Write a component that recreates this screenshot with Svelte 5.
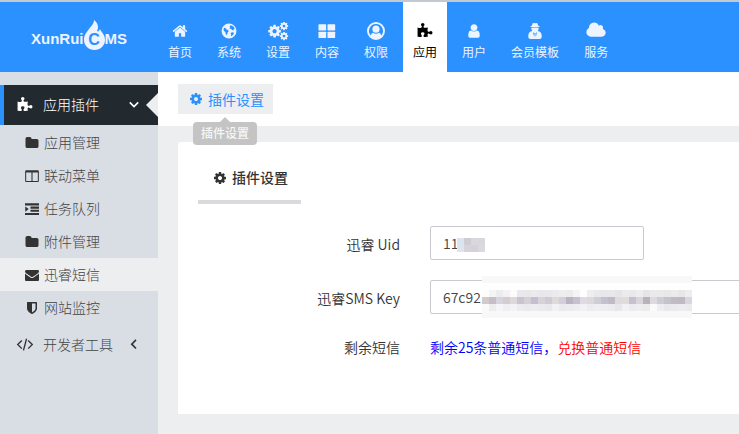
<script>
  const nav = [
    { icon: 'home', label: '首页' },
    { icon: 'globe', label: '系统' },
    { icon: 'cogs', label: '设置' },
    { icon: 'blocks', label: '内容' },
    { icon: 'account', label: '权限' },
    { icon: 'puzzle', label: '应用', active: true },
    { icon: 'user', label: '用户' },
    { icon: 'secret', label: '会员模板' },
    { icon: 'cloud', label: '服务' }
  ];

  const menu = [
    { icon: 'folder', label: '应用管理' },
    { icon: 'columns', label: '联动菜单' },
    { icon: 'indent', label: '任务队列' },
    { icon: 'folder', label: '附件管理' },
    { icon: 'envelope', label: '迅睿短信', active: true },
    { icon: 'shield', label: '网站监控' }
  ];

  const largeIcons = ['account', 'cogs', 'cloud'];

  let uid = $state('11');
  let smsKey = $state('67c92');

  // Colours of the blocks that hide the private part of each value, row by row
  const uidMask = [
    ['#dbe3ee', '#d0ccd4', '#dad8df', '#d8d7de'],
    ['#dfe5ee', '#d7d3da', '#d3d1d9', '#dad9df']
  ];
  const keyMask = [
    Array(30).fill('#f8f8f8'),
    Array(30).fill('#fefefe'),
    ['#fdfdfd', '#f4f4f5', '#ececee', '#f3f3f7', '#fcfcfc', '#e9e8ec', '#e8e7ea', '#ebeaee', '#e8e7eb', '#e9e9ed', '#ebebef', '#eeeef1', '#ececef', '#f4f4f7', '#fefefe', '#eeeef0', '#e9e9ec', '#e8e7ea', '#e8e8eb', '#e5e5e8', '#ebebee', '#e9e9ec', '#ededf0', '#e5e4e8', '#eaeaed', '#e9e9eb', '#e7e7ea', '#ebebee', '#e7e7ea', '#ededf0'],
    ['#d4cbc8', '#c3bec9', '#d6d5df', '#d4cdd0', '#dcd9dd', '#c9c4cd', '#d5d0d6', '#c2bfd0', '#d7d3d7', '#cfcbd5', '#ded9db', '#d2cfd8', '#bab4c2', '#c6c1cd', '#dddce5', '#dcd8dc', '#d1cdd5', '#c3c1cf', '#c0bac4', '#dedbdd', '#e0dcdb', '#c4c1d1', '#d8d5db', '#b8b2bd', '#dcdae1', '#cfccd4', '#c6c2cb', '#c1bbc4', '#beb9c2', '#d8d7df'],
    ['#fbfafa', '#ededef', '#f5f5f7', '#efeff1', '#f3f3f5', '#ececee', '#eaeaed', '#ededf0', '#ebebef', '#e9e9ed', '#f2f2f4', '#ebebee', '#ececef', '#eeeef2', '#f2f2f5', '#ededf0', '#efeff2', '#eeeef1', '#ececef', '#e7e7e9', '#f1f1f4', '#ececf0', '#eeeef1', '#ececee', '#fafafa', '#eeeef0', '#e9e9ed', '#ebebee', '#ededf0', '#ebebee'],
    Array(30).fill('#f8f8f8')
  ];

  const cogPath =
    'M1152 896q0-106-75-181t-181-75-181 75-75 181 75 181 181 75 181-75 75-181zm512-109v222q0 12-8 23t-20 13l-185 28q-19 54-39 91 35 50 107 138 10 12 10 25t-9 23q-27 37-99 108t-94 71q-12 0-26-9l-138-108q-44 23-91 38-16 136-29 186-7 28-36 28h-222q-14 0-24.500-8.500t-11.500-21.500l-28-184q-49-16-90-37l-141 107q-10 9-25 9-14 0-25-11-126-114-165-168-7-10-7-23 0-12 8-23 15-21 51-66.500t54-70.500q-27-50-41-99l-183-27q-13-2-21-12.500t-8-23.500v-222q0-12 8-23t19-13l186-28q14-46 39-92-40-57-107-138-10-12-10-24 0-10 9-23 26-36 98.500-107.500t94.500-71.500q13 0 26 10l138 107q44-23 91-38 16-136 29-186 7-28 36-28h222q14 0 24.500 8.500t11.500 21.500l28 184q49 16 90 37l142-107q9-9 24-9 13 0 25 10 129 119 165 170 7 8 7 22 0 12-8 23-15 21-51 66.500t-54 70.500q26 50 41 98l183 28q13 2 21 12.500t8 23.500z';
</script>

{#snippet icon(name, size = 16)}
  <svg class="icon" width={size} height={size} viewBox="0 0 1792 1792" aria-hidden="true">
    {#if name === 'home'}
      <path d="M1472 992v480q0 26-19 45t-45 19h-384v-384h-256v384h-384q-26 0-45-19t-19-45v-480q0-1 .5-3t.5-3l575-474 575 474q1 2 1 6zm223-69l-62 74q-8 9-21 11h-3q-13 0-21-7l-692-577-692 577q-12 8-24 7-13-2-21-11l-62-74q-8-10-7-23.500t11-21.500l719-599q32-26 76-26t76 26l244 204v-195q0-14 9-23t23-9h192q14 0 23 9t9 23v408l219 182q10 8 11 21.500t-7 23.500z" />
    {:else if name === 'globe'}
      <path fill-rule="evenodd" d="M896 60a836 836 0 1 0 0 1672a836 836 0 1 0 0-1672zM1010 270l190 20 240 170 90 170-90 60-60 150-130-60-130-130-110 10-60-90 110-100-110-70 60-80zM350 530l150 30 120 160 170 60 60 150-130 180-30 170-90 60-90-160-20-170-150-120-60-170zM1150 1060l200-30 110 90-90 180-190 170-80-30 50-160-80-120z" />
    {:else if name === 'cogs'}
      <path transform="translate(-180 180) scale(.82)" d={cogPath} />
      <path transform="translate(1010 -80) scale(.54)" d={cogPath} />
      <path transform="translate(1010 920) scale(.54)" d={cogPath} />
    {:else if name === 'blocks'}
      <rect x="-60" y="130" width="860" height="710" rx="70" />
      <rect x="952" y="130" width="860" height="710" rx="70" />
      <rect x="-60" y="970" width="860" height="710" rx="70" />
      <rect x="952" y="970" width="860" height="710" rx="70" />
    {:else if name === 'account'}
      <path fill-rule="evenodd" d="M896 0a896 896 0 1 1 0 1792a896 896 0 1 1 0-1792zM896 210a686 686 0 0 0-530 1130q70-250 240-280 120 110 290 110t290-110q170 30 240 280a686 686 0 0 0-530-1130z" />
      <circle cx="896" cy="710" r="355" />
    {:else if name === 'puzzle'}
      <path d="M1728 1098q0 81-44.500 135t-123.500 54q-41 0-77.500-17.500t-59-38-56.500-38-71-17.500q-110 0-110 124 0 39 16 115t15 115v5q-22 0-33 1-34 3-97.500 11.500t-115.500 13.500-98 5q-61 0-103-26.500t-42-83.500q0-37 17.500-71t38-56.500 38-59 17.500-77.500q0-79-54-123.500t-135-44.500q-84 0-143 45.500t-59 127.500q0 43 15 83t33.500 64.500 33.500 53 15 50.500q0 45-46 89-37 35-117 35-95 0-245-24-9-2-27.500-4t-27.500-4l-13-2q-1 0-3-1-2 0-2-1v-1024q2 1 17.500 3.500t34 5 21.500 3.500q150 24 245 24 80 0 117-35 46-44 46-89 0-22-15-50.500t-33.500-53-33.500-64.500-15-83q0-82 59-127.500t144-45.500q80 0 134 44.500t54 123.500q0 41-17.500 77.500t-38 59-38 56.500-17.500 71q0 57 42 83.500t103 26.500q64 0 180-15t163-17v2q-1 2-3.500 17.500t-5 34-3.500 21.500q-24 150-24 245 0 80 35 117 44 46 89 46 22 0 50.500-15t53-33.500 64.500-33.500 83-15q82 0 127.500 59t45.500 143z" />
    {:else if name === 'user'}
      <path d="M1536 1399q0 109-62.500 187t-150.500 78h-854q-88 0-150.500-78t-62.500-187q0-85 8.500-160.500t31.500-152 58.500-131 94-89 134.500-34.500q131 128 313 128t313-128q76 0 134.500 34.500t94 89 58.500 131 31.500 152 8.500 160.500zm-256-887q0 159-112.500 271.500t-271.500 112.500-271.500-112.500-112.500-271.500 112.500-271.500 271.500-112.500 271.500 112.500 112.500 271.500z" />
    {:else if name === 'secret'}
      <path d="M640 20q80-50 256 20 176-70 256-20 50 90 90 290 190 40 190 80 0 90-536 90t-536-90q0-40 190-80 40-200 90-290z" />
      <path fill-rule="evenodd" d="M480 540h832q20 190-100 320l80 50q350 80 360 540 10 330-250 330H390q-260 0-250-330 10-460 360-540l80-50q-120-130-100-320zM670 1030l130 520 60-350-50-90zM1122 1030l-130 520-60-350 50-90z" />
    {:else if name === 'cloud'}
      <path transform="translate(-64 -80)" d="M1920 1152q0 159-112.500 271.500t-271.500 112.500h-1088q-185 0-316.500-131.500t-131.500-316.500q0-132 71-241.500t187-163.500q-2-28-2-43 0-212 150-362t362-150q158 0 286.500 88t187.500 230q70-62 166-62 106 0 181 75t75 181q0 75-41 138 129 30 213 134.500t84 239.500z" />
    {:else if name === 'folder'}
      <path d="M1728 608v704q0 92-66 158t-158 66h-1216q-92 0-158-66t-66-158v-960q0-92 66-158t158-66h320q92 0 158 66t66 158v32h672q92 0 158 66t66 158z" />
    {:else if name === 'columns'}
      <path fill-rule="evenodd" d="M160 160h1472q140 0 140 140v1230q0 140-140 140H160q-140 0-140-140V300q0-140 140-140zM150 460v1080h676V460zM966 460v1080h676V460z" />
    {:else if name === 'indent'}
      <path d="M0 170h1792v270H0zM704 580h1088v270H704zM704 990h1088v270H704zM0 1400h1792v270H0zM30 560l450 350L30 1260z" />
    {:else if name === 'envelope'}
      <path d="M1792 710v794q0 66-47 113t-113 47h-1472q-66 0-113-47t-47-113v-794q44 49 101 87 362 246 497 345 57 42 92.500 65.500t94.500 48 110 24.500h2q51 0 110-24.500t94.500-48 92.500-65.500q170-123 498-345 57-39 100-87zm0-294q0 79-49 151t-122 123q-376 261-468 325-10 7-42.500 30.500t-54 38-52 32.500-57.500 27-50 9h-2q-23 0-50-9t-57.500-27-52-32.500-54-38-42.500-30.500q-91-64-262-182.500t-205-142.500q-62-42-117-115.500t-55-136.500q0-78 41.500-130t118.500-52h1472q65 0 112.500 47t47.500 113z" />
    {:else if name === 'shield'}
      <path d="M1344 960v-640h-448v1137q119-63 213-137 235-184 235-360zm192-768v768q0 86-33.500 170.500t-83 150-118 127.500-126.500 103-121 77.500-89.500 49.500-42.500 20q-12 6-26 6t-26-6q-16-7-42.500-20t-89.500-49.500-121-77.500-126.500-103-118-127.500-83-150-33.500-170.500v-768q0-26 19-45t45-19h1152q26 0 45 19t19 45z" />
    {:else if name === 'code'}
      <path class="line" d="M540 400L80 850l460 450M1252 400l460 450-460 450M1070 200L722 1500" />
    {:else if name === 'down'}
      <path class="line thick" d="M360 560l536 536 536-536" />
    {:else if name === 'left'}
      <path class="line thick" d="M1150 240L610 790l540 550" />
    {:else if name === 'cog'}
      <path d={cogPath} />
    {/if}
  </svg>
{/snippet}

{#snippet mask(rows)}
  <svg class="mask" width={rows[0].length * 7} height={rows.length * 7} shape-rendering="crispEdges" aria-hidden="true">
    {#each rows as row, y}
      {#each row as fill, x}
        <rect x={x * 7} y={y * 7} width="7" height="7" {fill} />
      {/each}
    {/each}
  </svg>
{/snippet}

<div class="page">
  <header>
    <a class="logo" href="#home" aria-label="XunRuiCMS">
      <span>XunRui</span>
      <span class="flame">
        <svg width="21" height="30" viewBox="0 0 21 30" aria-hidden="true">
          <path d="M10 0c4 3 5 7 3 11 1 1 2 0 3-2 1 3 5 5 5 11 0 6-5 10-10.500 10S0 26 0 20c0-5 2-7 5-11 2-3 5-5 5-9z" />
        </svg>
        <b>C</b>
      </span>
      <span>MS</span>
    </a>
    <nav>
      {#each nav as item}
        <a href="#{item.icon}" class:active={item.active}>
          {@render icon(item.icon, largeIcons.includes(item.icon) ? 18 : 16)}
          <span>{item.label}</span>
        </a>
      {/each}
    </nav>
  </header>

  <div class="body">
    <aside>
      <a class="group open" href="#apps">
        {@render icon('puzzle')}
        <span>应用插件</span>
        {@render icon('down', 14)}
      </a>
      <ul>
        {#each menu as item}
          <li>
            <a href="#{item.icon}" class:active={item.active}>
              {@render icon(item.icon, 14)}
              <span>{item.label}</span>
            </a>
          </li>
        {/each}
      </ul>
      <a class="group" href="#developer">
        {@render icon('code')}
        <span>开发者工具</span>
        {@render icon('left', 14)}
      </a>
    </aside>

    <main>
      <div class="bar">
        <a class="crumb" href="#settings" aria-describedby="tip">
          {@render icon('cog', 14)}
          <span>插件设置</span>
        </a>
        <div class="tip" id="tip" role="tooltip">插件设置</div>
      </div>

      <section>
        <h1>{@render icon('cog', 14)}<span>插件设置</span></h1>
        <form>
          <div class="row">
            <label for="uid">迅睿 Uid</label>
            <div class="field short">
              <input id="uid" type="text" bind:value={uid} />
              <div class="cover uid">{@render mask(uidMask)}</div>
            </div>
          </div>
          <div class="row">
            <label for="key">迅睿SMS Key</label>
            <div class="field long">
              <input id="key" type="text" bind:value={smsKey} />
              <div class="cover key">{@render mask(keyMask)}</div>
            </div>
          </div>
          <div class="row">
            <span class="label">剩余短信</span>
            <p>剩余25条普通短信，<a href="#exchange">兑换普通短信</a></p>
          </div>
        </form>
      </section>
    </main>
  </div>
</div>

<style>
  :global(body) {
    margin: 0;
    overflow-x: hidden;
    background: #eceef0;
  }
  .page {
    display: flex;
    flex-direction: column;
    min-height: 100vh;
    overflow: hidden;
    font: 14px/20px 'Noto Sans CJK SC', 'Noto Sans', sans-serif;
    color: #333;
  }
  a {
    color: inherit;
    text-decoration: none;
  }
  .icon {
    display: block;
    flex: none;
    fill: currentColor;
    overflow: visible;
  }
  .line {
    fill: none;
    stroke: currentColor;
    stroke-width: 150;
  }
  .thick {
    stroke-width: 210;
  }

  header {
    display: flex;
    height: 70px;
    border-top: 2px solid #c3c9cf;
    background: #2a91ff;
    color: #eef4ff;
  }
  .logo {
    display: flex;
    align-items: center;
    box-sizing: border-box;
    width: 158px;
    padding: 4px 0 0 31px;
    font: bold 15px/20px 'Liberation Sans', Arial, sans-serif;
  }
  .flame {
    position: relative;
    height: 30px;
    margin-top: -8px;
  }
  .flame svg {
    display: block;
    fill: currentColor;
  }
  .flame b {
    position: absolute;
    inset: 10px 0 0;
    font-size: 16px;
    text-align: center;
    color: #2a91ff;
  }
  nav {
    display: flex;
    gap: 5px;
  }
  nav a {
    display: flex;
    flex-direction: column;
    align-items: center;
    gap: 3px;
    padding: 20px 10px 0;
    font-size: 12px;
    line-height: 18px;
  }
  nav .icon {
    height: 18px;
  }
  nav .active {
    background: #fff;
    color: #000;
  }

  .body {
    display: flex;
    flex: 1;
  }
  aside {
    flex: none;
    box-sizing: border-box;
    width: 158px;
    padding-top: 13px;
    background: #d9dde4;
    font-weight: 300;
  }
  aside span {
    padding-bottom: 2px;
    color: #444;
  }
  .group {
    position: relative;
    display: flex;
    align-items: center;
    gap: 10px;
    height: 40px;
    padding: 0 17px;
  }
  .group span {
    flex: 1;
  }
  .open {
    padding-left: 13px;
    border-left: 4px solid #2a91ff;
    background: #22292f;
    color: #fff;
  }
  .open span {
    color: #fff;
  }
  .open::after {
    content: '';
    position: absolute;
    right: 0;
    border: 12px solid transparent;
    border-left-width: 0;
    border-right-color: #eceef0;
  }
  ul {
    margin: 0;
    padding: 1px 0;
    list-style: none;
  }
  li a {
    display: flex;
    align-items: center;
    gap: 5px;
    height: 33px;
    padding-left: 25px;
  }
  li .active {
    background: #eceef0;
  }

  main {
    flex: 1;
    min-width: 0;
  }
  .bar {
    position: relative;
    padding: 12px 20px;
    background: #fff;
  }
  .crumb {
    display: inline-flex;
    align-items: center;
    gap: 5px;
    height: 30px;
    padding: 0 9px 0 11px;
    background: #eceef0;
    color: #2a91ff;
    vertical-align: top;
  }
  .tip {
    position: absolute;
    top: 50px;
    left: 35px;
    padding: 0 8px 2px;
    border-radius: 4px;
    background: #c4c4c4;
    color: #f6f6f6;
    font-size: 12px;
    font-weight: 500;
    line-height: 21px;
  }
  .tip::before {
    content: '';
    position: absolute;
    top: -5px;
    left: 27px;
    border: 5px solid transparent;
    border-top-width: 0;
    border-bottom-color: #c4c4c4;
  }

  section {
    margin: 16px 0 20px 20px;
    padding: 16px 0 52px 20px;
    border-radius: 3px 0 0 0;
    background: #fff;
  }
  h1 {
    display: inline-flex;
    align-items: center;
    gap: 5px;
    margin: 0;
    padding: 9px 13px 11px 15px;
    border-bottom: 4px solid #d9dade;
    font-size: 14px;
    font-weight: 500;
    vertical-align: top;
  }
  h1 span {
    padding-bottom: 2px;
  }
  form {
    display: flex;
    flex-direction: column;
    gap: 20px;
    padding-top: 22px;
  }
  .row {
    display: flex;
    gap: 30px;
    font-weight: 350;
  }
  label,
  .label {
    flex: none;
    width: 202px;
    padding: 8px 0 6px;
    text-align: right;
  }
  .field {
    position: relative;
    flex: 1;
  }
  .short {
    flex: 0 1 214px;
  }
  .long {
    min-width: 320px;
  }
  input {
    display: block;
    box-sizing: border-box;
    width: 100%;
    height: 34px;
    padding: 0 12px;
    border: 1px solid #c9cacf;
    border-radius: 2px;
    background: #fff;
    color: #444;
    font: inherit;
  }
  .cover {
    position: absolute;
    pointer-events: none;
  }
  .uid {
    top: 12px;
    left: 27px;
  }
  .key {
    top: -4px;
    left: 52px;
  }
  .mask {
    display: block;
  }
  p,
  .label {
    margin: 0;
    padding: 3px 0 5px;
  }
  p {
    color: #00f;
  }
  p a {
    color: #f00;
  }
</style>
